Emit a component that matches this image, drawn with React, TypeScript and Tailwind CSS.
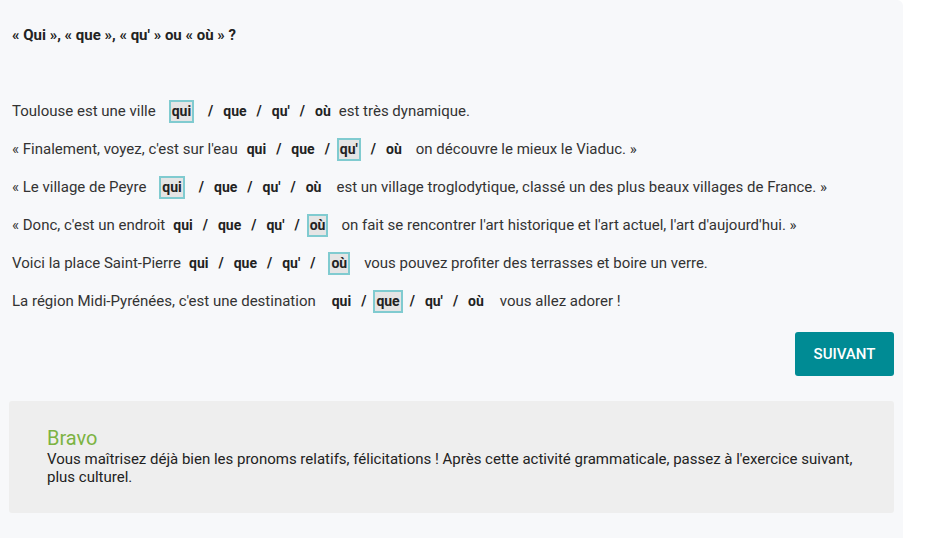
import React from 'react'

type Row = {
    before: string
    selected: number
    after: string
    lead: string
    tail: string
    boxExtra?: string
}

const options = ['qui', 'que', "qu'", 'où']

export default function App() {
    const rows: Row[] = [
        { before: 'Toulouse est une ville', selected: 0, after: 'est très dynamique.', lead: 'ml-[13px]', tail: 'ml-[5px]', boxExtra: 'mr-[7px]' },
        { before: "« Finalement, voyez, c'est sur l'eau", selected: 2, after: 'on découvre le mieux le Viaduc. »', lead: 'ml-[6px]', tail: 'ml-[11px]', boxExtra: 'mr-[3px]' },
        { before: '« Le village de Peyre', selected: 0, after: 'est un village troglodytique, classé un des plus beaux villages de France. »', lead: 'ml-[13px]', tail: 'ml-[12px]', boxExtra: 'mr-[7px]' },
        { before: "« Donc, c'est un endroit", selected: 3, after: "on fait se rencontrer l'art historique et l'art actuel, l'art d'aujourd'hui. »", lead: 'ml-[5px]', tail: 'ml-[13px]' },
        { before: 'Voici la place Saint-Pierre', selected: 3, after: 'vous pouvez profiter des terrasses et boire un verre.', lead: 'ml-[5px]', tail: 'ml-[14px]', boxExtra: 'ml-[6px]' },
        { before: "La région Midi-Pyrénées, c'est une destination", selected: 1, after: 'vous allez adorer !', lead: 'ml-[13px]', tail: 'ml-[13px]' }
    ]

    return (
        <div className="w-[931px] h-[538px] bg-white overflow-hidden font-['Roboto',sans-serif]">
            <div className="w-[903px] h-[538px] bg-[#f7f8fa] rounded-tr-[6px] px-[9px] pt-[25px] flex flex-col">
                {/* Question */}
                <h2 className="ml-[3px] text-[15px] leading-[20px] font-bold text-[#222]">
                    « Qui », « que », « qu' » ou « où » ?
                </h2>

                {/* Sentences */}
                <div className="mt-[47px] ml-[3px] flex flex-col">
                    {rows.map((row) => (
                        <div key={row.before} className="h-[38px] flex items-center text-[15px] text-[#333] whitespace-nowrap">
                            <span>{row.before}</span>
                            <span className={`${row.lead} flex items-center text-[14px] font-bold text-[#222]`}>
                                {options.map((opt, i) => (
                                    <React.Fragment key={opt}>
                                        {i > 0 && <span className="mx-[7px]">/</span>}
                                        <span
                                            className={`px-[1px] leading-[19px] border-2 ${i === row.selected
                                                ? `border-[#80cbd0] bg-[#e5e5e5] ${row.boxExtra ?? ''}`
                                                : 'border-transparent'
                                                }`}
                                        >
                                            {opt}
                                        </span>
                                    </React.Fragment>
                                ))}
                            </span>
                            <span className={row.tail}>{row.after}</span>
                        </div>
                    ))}
                </div>

                {/* Next button */}
                <div className="mt-[12px] flex justify-end">
                    <button className="w-[99px] h-[44px] rounded-[3px] bg-[#008b94] text-white text-[15px] font-medium">
                        SUIVANT
                    </button>
                </div>

                {/* Feedback */}
                <div className="mt-[25px] bg-[#eeeeee] rounded-[3px] pl-[38px] pr-[38px] pt-[26px] pb-[27px]">
                    <div className="text-[20px] leading-[23px] text-[#7cb342]">Bravo</div>
                    <p className="text-[15px] leading-[18px] text-[#222]">
                        Vous maîtrisez déjà bien les pronoms relatifs, félicitations ! Après cette activité grammaticale, passez à l'exercice suivant, plus culturel.
                    </p>
                </div>
            </div>
        </div>
    )
}
